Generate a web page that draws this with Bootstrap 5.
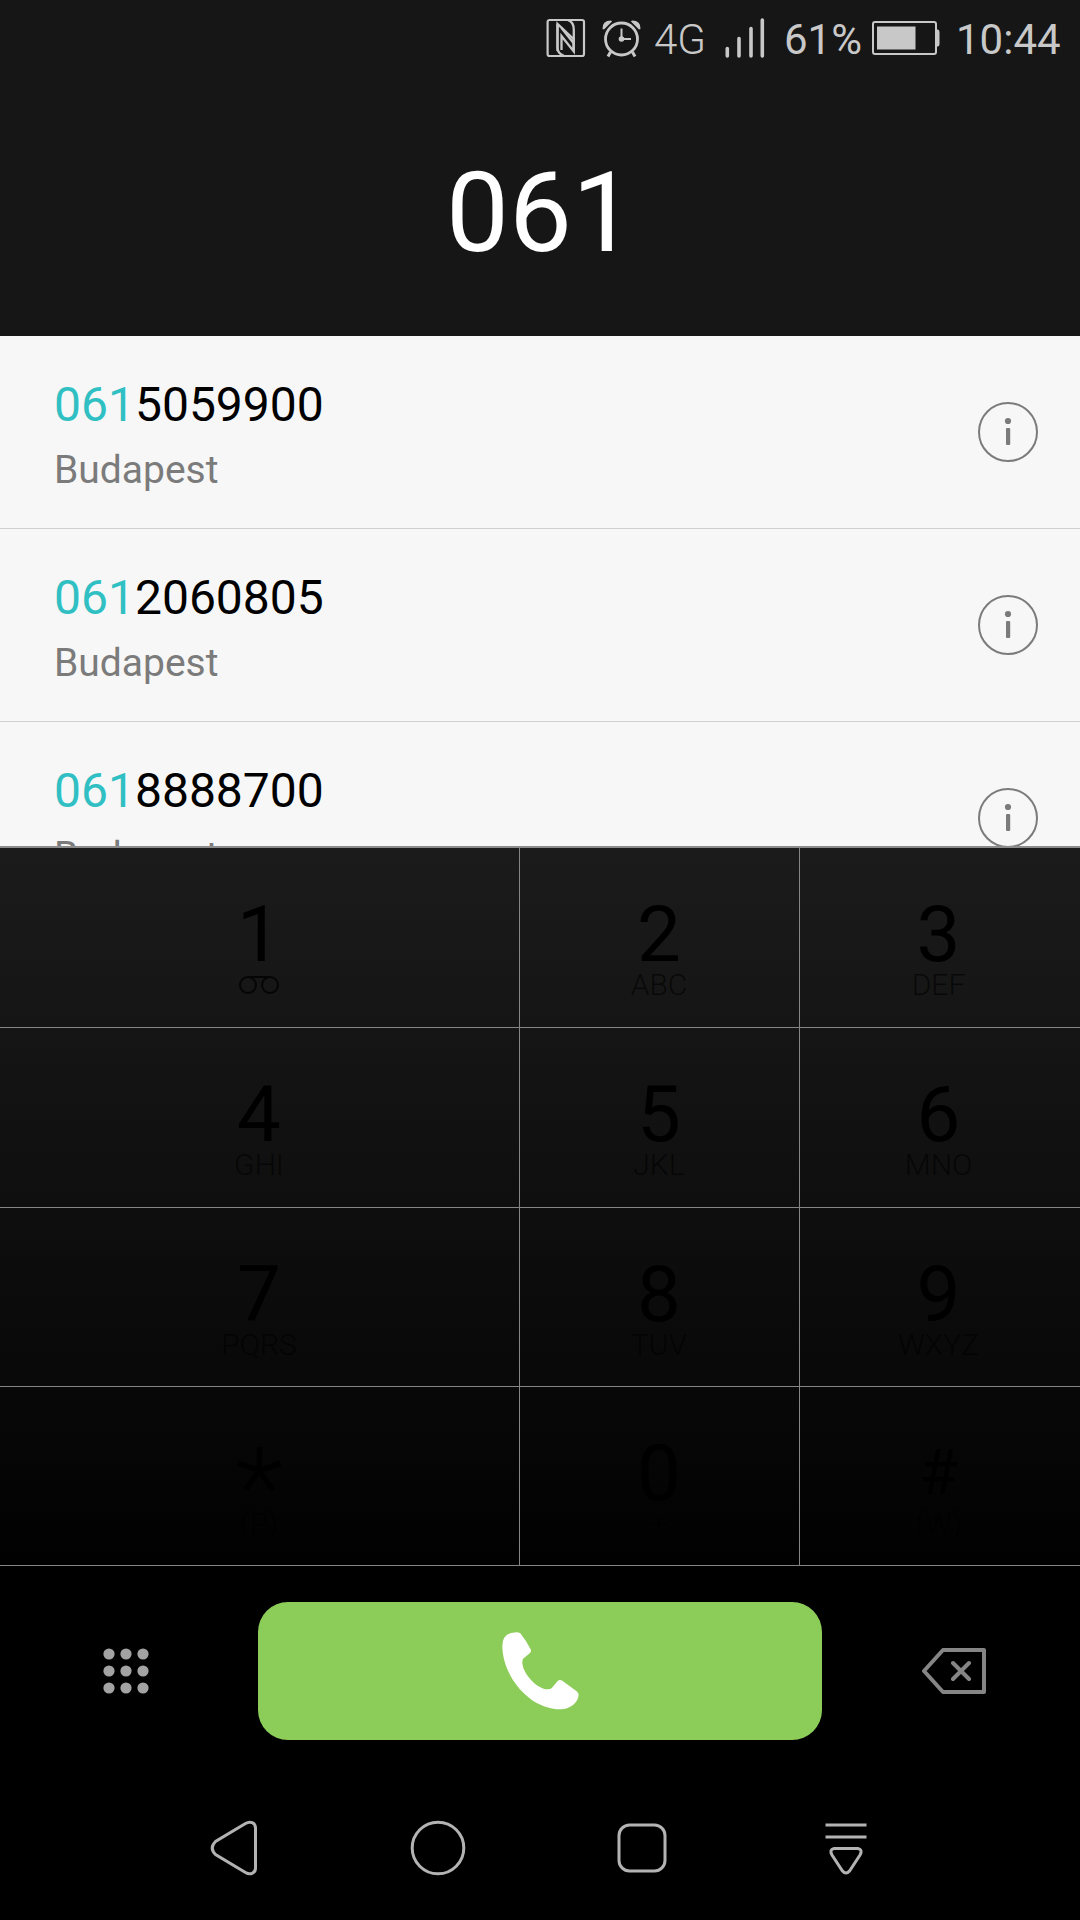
<!DOCTYPE html>
<html lang="en">
<head>
<meta charset="utf-8">
<meta name="viewport" content="width=device-width, initial-scale=1">
<title>Dialer</title>
<link href="https://cdn.jsdelivr.net/npm/bootstrap@5.3.0/dist/css/bootstrap.min.css" rel="stylesheet">
<style>
  body { font-family: Roboto, "Liberation Sans", sans-serif; background: #000; }
  svg { display: block; flex: none; }
  .phone { width: 1080px; height: 1920px; }
  .top-area { height: 336px; background: #161616; }
  .status { height: 76px; color: #c8c8c8; font-size: 42px; line-height: 50px; padding-right: 17px; }
  .status span { padding-top: 3px; white-space: nowrap; }
  .net { font-weight: 300; width: 54px; margin-left: 12px; }
  .pct { width: 80px; margin-left: 18px; }
  .clock { width: 107px; margin-left: 16px; }
  .signal { margin-left: 16px; }
  .dialed { font-size: 112px; line-height: 132px; color: #fff; padding: 71px 0 0 1px; }
  .results { height: 510px; background: #f7f7f7; }
  .result { height: 193px; flex: none; padding: 0 42px 0 54px; border-bottom: 1px solid #d0d0d0; }
  .num { font-size: 48px; line-height: 56px; color: #000; padding-top: 6px; }
  .num b { font-weight: 400; color: #30bfc3; }
  .city { font-size: 39px; line-height: 46px; color: #7b7b7b; margin-top: 14px; }
  .pad { border-top: 2px solid #8b8b8b; background: linear-gradient(#1b1b1b, #151515 25%, #0e0e0e 52%, #080808 76%, #010101); }
  .pad-row { height: 180px; border-bottom: 1px solid #858585; }
  .pad-row.tight { height: 179px; }
  .key { padding: 41px 1px 0 0; border-right: 1px solid #858585; color: #000; }
  .key:nth-child(1) { width: 520px; }
  .key:nth-child(2) { width: 280px; }
  .key:nth-child(3) { width: 280px; border-right: 0; padding-right: 3px; }
  .digit { font-size: 78px; line-height: 92px; height: 92px; }
  .sub { font-size: 30px; font-weight: 300; line-height: 32px; margin-top: -12px; color: rgba(0,0,0,.6); }
  .voicemail { margin-top: -7px; }
  .star { font-size: 112px; line-height: 120px; font-weight: 300; }
  .hash { font-size: 63px; line-height: 90px; }
  .actions { height: 210px; padding: 0 94px 0 103px; }
  .call-btn, .call-btn:hover { width: 564px; height: 138px; border: 0; border-radius: 30px; background: #8ccc58; margin-left: 9px; }
  .nav-keys { height: 144px; }
  .nav-keys div { width: 204px; }
</style>
</head>
<body class="m-0">
<main class="phone d-flex flex-column overflow-hidden">
  <header class="top-area">
    <div class="status d-flex align-items-center justify-content-end">
      <svg width="40" height="40" viewBox="0 0 40 40" fill="none" stroke="#c8c8c8">
        <rect x="1.6" y="2" width="36.400" height="36" rx="2" stroke-width="2.200"/>
        <path d="M18 37.800Q11.500 36 11.500 29V6L27.500 21V33" stroke-width="2.300"/>
        <path d="M22 2.200Q27.800 4 27.800 12V33.500L15.500 18V32" stroke-width="2.300"/>
        <path d="M11.500 6V33M15.500 10L27.500 25" stroke-width="2.300"/>
      </svg>
      <svg class="ms-3" width="40" height="40" viewBox="0 0 40 40" fill="none" stroke="#c8c8c8">
        <circle cx="19.500" cy="21" r="16" stroke-width="2.800"/>
        <path d="M19.500 10.500V21H29" stroke-width="2"/>
        <circle cx="19.500" cy="21" r="2.800" fill="#c8c8c8" stroke="none"/>
        <path d="M8.500 34L6 38.500M30.500 34L33 38.500" stroke-width="3"/>
        <path d="M0.500 11Q0 2.500 9 2.500L10 3.500L2 11.500ZM38.500 11Q39 2.500 30 2.500L29 3.500L37 11.500Z" fill="#c8c8c8" stroke="none"/>
      </svg>
      <span class="net">4G</span>
      <svg class="signal" width="42" height="40" viewBox="0 0 42 40" stroke="#c8c8c8" stroke-width="3.600" stroke-linecap="round">
        <path d="M3.300 30.500V38M15 20.500V38M27 10.500V38M38.300 2V38"/>
      </svg>
      <span class="pct">61%</span>
      <svg class="ms-2" width="68" height="34" viewBox="0 0 68 34">
        <rect x="1" y="1" width="63" height="32" rx="2" fill="none" stroke="#c8c8c8" stroke-width="2"/>
        <path d="M5 5.500H43.500V28.500H5ZM64 8.500H66Q67.500 9 67.500 11V23Q67.500 25 66 25.500H64Z" fill="#c8c8c8"/>
      </svg>
      <span class="clock">10:44</span>
    </div>
    <div class="dialed text-center">061</div>
  </header>

  <section class="results d-flex flex-column overflow-hidden flex-shrink-0">
    <div class="result d-flex align-items-center justify-content-between">
      <div><div class="num"><b>061</b>5059900</div><div class="city">Budapest</div></div>
      <svg width="60" height="60" viewBox="0 0 60 60"><circle cx="30" cy="30" r="29" fill="none" stroke="#7b7b7b" stroke-width="2"/><circle cx="30" cy="19" r="3.100" fill="#7b7b7b"/><rect x="28" y="26" width="4.200" height="17" rx="1" fill="#7b7b7b"/></svg>
    </div>
    <div class="result d-flex align-items-center justify-content-between">
      <div><div class="num"><b>061</b>2060805</div><div class="city">Budapest</div></div>
      <svg width="60" height="60" viewBox="0 0 60 60"><circle cx="30" cy="30" r="29" fill="none" stroke="#7b7b7b" stroke-width="2"/><circle cx="30" cy="19" r="3.100" fill="#7b7b7b"/><rect x="28" y="26" width="4.200" height="17" rx="1" fill="#7b7b7b"/></svg>
    </div>
    <div class="result d-flex align-items-center justify-content-between">
      <div><div class="num"><b>061</b>8888700</div><div class="city">Budapest</div></div>
      <svg width="60" height="60" viewBox="0 0 60 60"><circle cx="30" cy="30" r="29" fill="none" stroke="#7b7b7b" stroke-width="2"/><circle cx="30" cy="19" r="3.100" fill="#7b7b7b"/><rect x="28" y="26" width="4.200" height="17" rx="1" fill="#7b7b7b"/></svg>
    </div>
  </section>

  <section class="pad text-center flex-shrink-0">
    <div class="pad-row d-flex">
      <div class="key"><div class="digit">1</div>
        <svg class="voicemail mx-auto" width="42" height="22" viewBox="0 0 42 22" fill="none" stroke="#050505" stroke-width="2"><circle cx="10" cy="11" r="8"/><circle cx="32" cy="11" r="8"/><path d="M10 3H32"/></svg>
      </div>
      <div class="key"><div class="digit">2</div><div class="sub">ABC</div></div>
      <div class="key"><div class="digit">3</div><div class="sub">DEF</div></div>
    </div>
    <div class="pad-row d-flex">
      <div class="key"><div class="digit">4</div><div class="sub">GHI</div></div>
      <div class="key"><div class="digit">5</div><div class="sub">JKL</div></div>
      <div class="key"><div class="digit">6</div><div class="sub">MNO</div></div>
    </div>
    <div class="pad-row tight d-flex">
      <div class="key"><div class="digit">7</div><div class="sub">PQRS</div></div>
      <div class="key"><div class="digit">8</div><div class="sub">TUV</div></div>
      <div class="key"><div class="digit">9</div><div class="sub">WXYZ</div></div>
    </div>
    <div class="pad-row tight d-flex">
      <div class="key"><div class="digit star">*</div><div class="sub">(P)</div></div>
      <div class="key"><div class="digit">0</div><div class="sub">+</div></div>
      <div class="key"><div class="digit hash">#</div><div class="sub">(W)</div></div>
    </div>
  </section>

  <section class="actions d-flex align-items-center justify-content-between flex-shrink-0">
    <svg width="46" height="46" viewBox="0 0 46 46" fill="#a3a3a3">
      <circle cx="6" cy="6" r="5.600"/><circle cx="23" cy="6" r="5.600"/><circle cx="40" cy="6" r="5.600"/>
      <circle cx="6" cy="23" r="5.600"/><circle cx="23" cy="23" r="5.600"/><circle cx="40" cy="23" r="5.600"/>
      <circle cx="6" cy="40" r="5.600"/><circle cx="23" cy="40" r="5.600"/><circle cx="40" cy="40" r="5.600"/>
    </svg>
    <button class="btn call-btn p-0 d-flex align-items-center justify-content-center" type="button" aria-label="Call">
      <svg width="77" height="78" viewBox="1265 155 231 234" fill="#fff"><path d="M1297 157Q1314 154 1320 159Q1338 182 1350 205Q1355 213 1348 219L1330 234Q1325 238 1326 248C1328 281 1371 327 1402 327Q1411 327 1415 322L1432 302Q1438 296 1446 301L1489 333Q1495 338 1495 345C1493 368 1468 387 1441 387C1344 387 1266 284 1266 197Q1266 162 1297 157Z"/></svg>
    </button>
    <svg width="64" height="46" viewBox="0 0 64 46" fill="none" stroke="#858585" stroke-width="4" stroke-linejoin="round" stroke-linecap="round">
      <path d="M21 2H62V44H21L2 23ZM31 15L47 31M47 15L31 31"/>
    </svg>
  </section>

  <nav class="nav-keys d-flex justify-content-center align-items-center flex-shrink-0">
    <div><svg class="mx-auto" width="48" height="56" viewBox="0 0 48 56" fill="none" stroke="#b3b3b3" stroke-width="3"><path d="M35.500 3.500C40 .8 45.500 2.500 45.500 8V48C45.500 53.500 40 55.200 35.500 52.500L5.500 34.500Q-1 28 5.500 21.500Z"/></svg></div>
    <div><svg class="mx-auto" width="56" height="56" viewBox="0 0 56 56" fill="none" stroke="#b3b3b3" stroke-width="3"><circle cx="28" cy="28" r="25.800"/></svg></div>
    <div><svg class="mx-auto" width="50" height="50" viewBox="0 0 50 50" fill="none" stroke="#b3b3b3" stroke-width="3"><rect x="2" y="2" width="46" height="46" rx="10.500"/></svg></div>
    <div><svg class="mx-auto" width="42" height="54" viewBox="0 0 42 54" fill="none" stroke="#b3b3b3" stroke-width="3"><path d="M.5 4H41.500M.5 16H41.500M9 27.500H33Q38 28.500 35 34L24.500 50Q21 54 17.500 50L7 34Q4 28.500 9 27.500Z"/></svg></div>
  </nav>
</main>
<script src="https://cdn.jsdelivr.net/npm/bootstrap@5.3.0/dist/js/bootstrap.bundle.min.js"></script>
</body>
</html>
